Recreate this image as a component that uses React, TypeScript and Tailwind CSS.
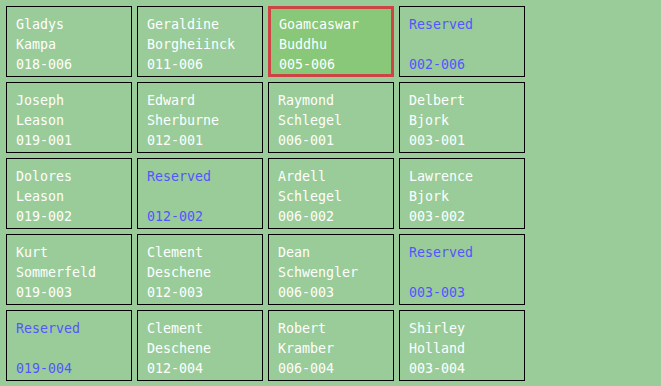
import React from "react";

type Cell = { a: string; b: string; id: string; reserved?: boolean; active?: boolean };

const cells: Cell[] = [
  { a: "Gladys", b: "Kampa", id: "018-006" },
  { a: "Geraldine", b: "Borgheiinck", id: "011-006" },
  { a: "Goamcaswar", b: "Buddhu", id: "005-006", active: true },
  { a: "Reserved", b: "", id: "002-006", reserved: true },
  { a: "Joseph", b: "Leason", id: "019-001" },
  { a: "Edward", b: "Sherburne", id: "012-001" },
  { a: "Raymond", b: "Schlegel", id: "006-001" },
  { a: "Delbert", b: "Bjork", id: "003-001" },
  { a: "Dolores", b: "Leason", id: "019-002" },
  { a: "Reserved", b: "", id: "012-002", reserved: true },
  { a: "Ardell", b: "Schlegel", id: "006-002" },
  { a: "Lawrence", b: "Bjork", id: "003-002" },
  { a: "Kurt", b: "Sommerfeld", id: "019-003" },
  { a: "Clement", b: "Deschene", id: "012-003" },
  { a: "Dean", b: "Schwengler", id: "006-003" },
  { a: "Reserved", b: "", id: "003-003", reserved: true },
  { a: "Reserved", b: "", id: "019-004", reserved: true },
  { a: "Clement", b: "Deschene", id: "012-004" },
  { a: "Robert", b: "Kramber", id: "006-004" },
  { a: "Shirley", b: "Holland", id: "003-004" },
];

export default function App() {
  return (
    <div
      className="w-[661px] h-[386px] bg-[#99cc99] p-[6px]"
      style={{ fontFamily: '"DejaVu Sans Mono", "Liberation Mono", monospace' }}
    >
      <div className="grid grid-cols-[repeat(4,126px)] auto-rows-[71px] gap-[5px]">
        {cells.map((c, i) => (
          <div
            key={i}
            className={
              c.active
                ? "border-[3px] border-[#cc4444] bg-[#88c878] pl-[8px] pt-[6px] text-[13.3px] leading-[20px]"
                : "border border-black pl-[9px] pt-[8px] text-[13.3px] leading-[20px]"
            }
          >
            <div className={c.reserved ? "text-[#5555ff]" : "text-white"}>
              <div className="h-[20px] whitespace-nowrap">{c.a}</div>
              <div className="h-[20px] whitespace-nowrap">{c.b}</div>
              <div className="h-[20px] whitespace-nowrap">{c.id}</div>
            </div>
          </div>
        ))}
      </div>
    </div>
  );
}
